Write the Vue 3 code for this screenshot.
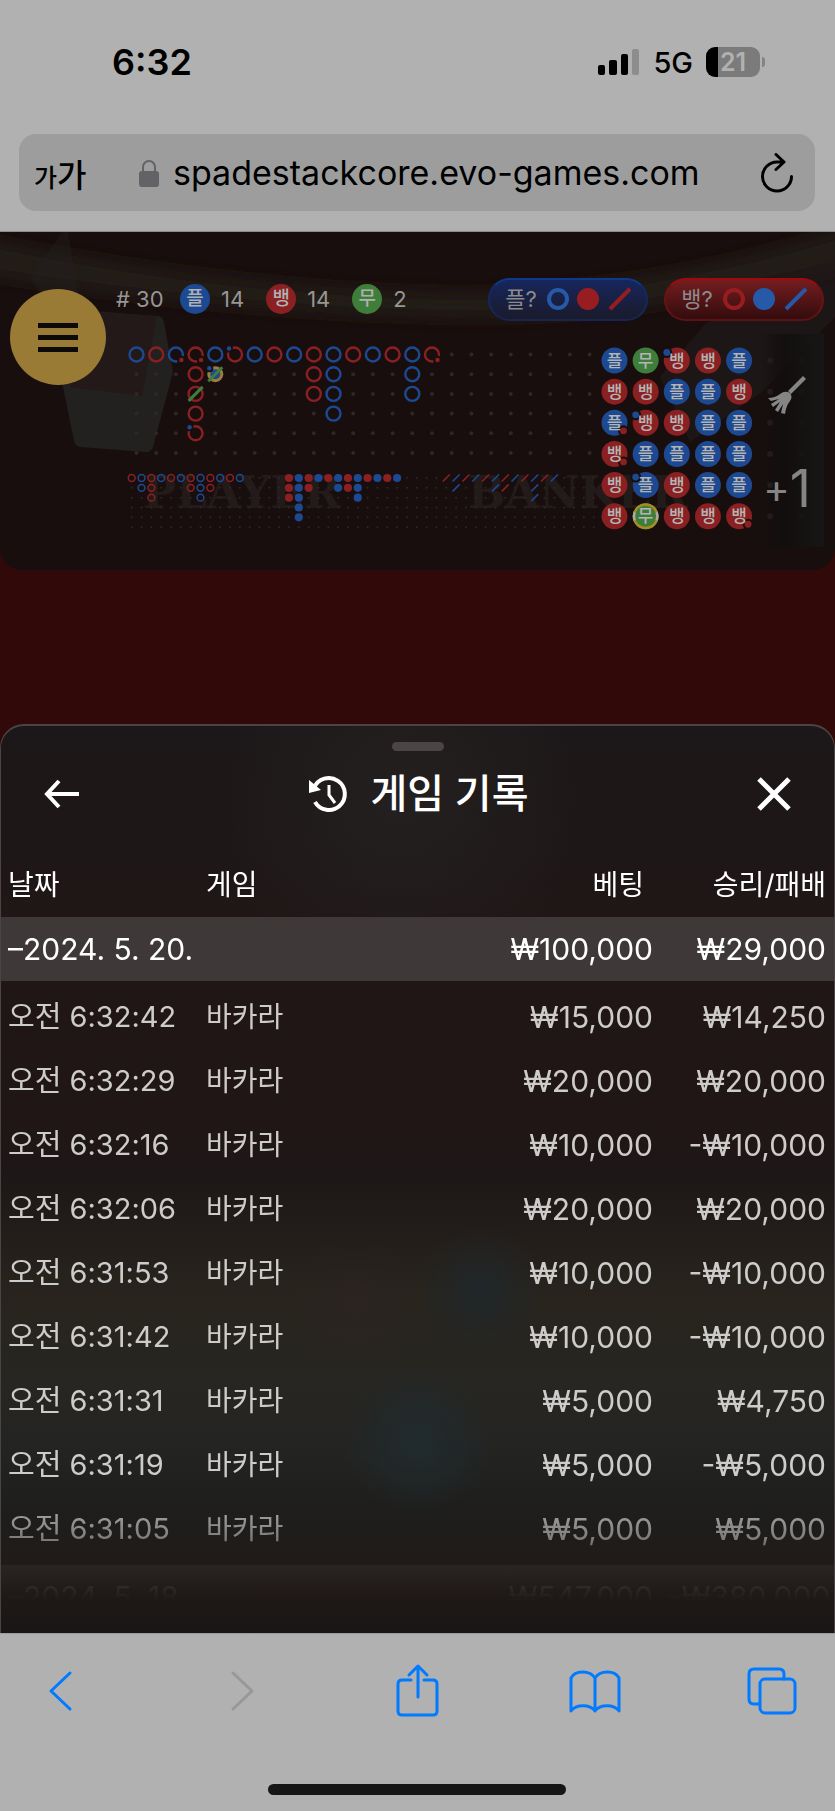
<template>
  <div class="phone">
    <header class="top">
      <div class="status">
        <span class="clock">6:32</span>
        <div class="signals">
          <svg width="42" height="26" viewBox="0 0 42 26" aria-hidden="true">
            <rect x="0" y="16" width="7" height="10" rx="2" />
            <rect x="11" y="11" width="8" height="15" rx="2" />
            <rect x="23" y="5" width="7" height="21" rx="2" />
            <rect x="34" y="0" width="7" height="26" rx="2" fill="#8d8d8d" />
          </svg>
          <span class="network">5G</span>
          <div class="battery"><span>21</span></div>
        </div>
      </div>
      <div class="address">
        <button class="text-size" aria-label="글자 크기"><small>가</small>가</button>
        <svg width="20" height="28" viewBox="0 0 20 28" aria-hidden="true">
          <path d="M4 13V8a6 6 0 0 1 12 0v5" fill="none" stroke="#626267" stroke-width="2" />
          <rect x="0" y="12" width="20" height="16" rx="3" fill="#626267" />
        </svg>
        <input v-model="url" type="text" aria-label="주소" />
        <button aria-label="새로고침">
          <svg width="36" height="40" viewBox="0 0 36 40" fill="none" stroke="#000" stroke-width="3" stroke-linecap="round" stroke-linejoin="round">
            <path d="M25 9H18a14.500 14.500 0 1 0 14.500 14.500M17 1.500l8 7.500-8 7.500" />
          </svg>
        </button>
      </div>
    </header>

    <main class="game">
      <section class="board">
        <svg class="scene" viewBox="0 0 835 338" preserveAspectRatio="none" aria-hidden="true">
          <filter id="soft" x="-10%" y="-30%" width="120%" height="160%"><feGaussianBlur stdDeviation="8" /></filter>
          <path d="M-30 4C160 44 350 62 480 60S750 28 865 -8V32C740 56 640 86 480 86S120 66 -30 40Z" fill="#201b18" filter="url(#soft)" />
          <path d="M62 0L30 46 40 60 80 72 68 0Z" fill="#242020" opacity=".4" />
          <path d="M92 79L158 84Q163 85 164 90L173 140 153 215Q151 220 146 220L80 215Q75 214 74 209L60 140Z" fill="#232020" />
          <path d="M98 80L157 84 142 164 70 155Z" fill="#231919" />
          <path d="M705 92L775 50 835 25V85L762 160 690 210 660 145Z" fill="#201a19" opacity=".7" />
        </svg>

        <button class="menu" aria-label="메뉴"><i></i><i></i><i></i></button>

        <div class="score">
          <div class="counts">
            <span class="rounds"># 30</span>
            <template v-for="item in counts" :key="item.kind">
              <b :class="['badge', item.kind]">{{ labels[item.kind] }}</b>
              <span class="total">{{ item.total }}</span>
            </template>
            <button v-for="ask in asks" :key="ask.kind" :class="['ask', ask.kind]">
              <span>{{ labels[ask.kind] }}?</span>
              <svg width="86" height="24" viewBox="0 0 86 24" aria-hidden="true">
                <circle cx="13" cy="12" r="9" fill="none" :stroke="ask.ring" stroke-width="4" />
                <circle cx="43" cy="12" r="11" :fill="ask.dot" />
                <path d="M65 22L85 2" :stroke="ask.slash" stroke-width="4" />
              </svg>
            </button>
          </div>

          <div class="roads">
            <svg class="marks" viewBox="0 0 708 213" aria-hidden="true">
              <text x="27" y="174">PLAYER</text>
              <text x="352" y="174">BANKER</text>
            </svg>

            <svg class="road-main" viewBox="0 0 484 213" role="img" aria-label="빅로드">
              <g v-for="cell in bigRoad" :key="cell.id" :transform="`translate(${cell.x} ${cell.y})`">
                <circle v-if="!cell.code" r="2" fill="#302625" />
                <template v-else>
                  <circle v-if="cell.code.includes('g')" r="8" fill="#a07c3a" />
                  <circle :r="cell.code.includes('g') ? 5 : 7" :fill="cell.code.includes('g') ? colors.B : 'none'" :stroke="cell.code.includes('g') ? 'none' : colors[cell.code[0]]" stroke-width="2.4" />
                  <path v-if="cell.code.includes('t')" d="M-7 7L7 -7" :stroke="colors.T" stroke-width="3" />
                  <template v-if="cell.code.includes('l')">
                    <circle cx="-6" cy="-6" r="4" fill="#190e0e" />
                    <circle cx="-6" cy="-6" r="2.2" :fill="colors.B" />
                  </template>
                  <template v-if="cell.code.includes('r')">
                    <circle cx="5" cy="5" r="4" fill="#190e0e" />
                    <circle cx="5.5" cy="5.5" r="2.2" :fill="colors.R" />
                  </template>
                </template>
              </g>
              <g v-for="cell in smallRoads" :key="cell.id" :transform="`translate(${cell.x} ${cell.y})`">
                <circle v-if="!cell.code" r="1" fill="#302625" />
                <circle v-else-if="cell.col < 16" r="3.4" fill="none" :stroke="colors[cell.code]" stroke-width="1.5" />
                <circle v-else-if="cell.col < 32" r="4.1" :fill="colors[cell.code]" />
                <path v-else d="M-3.5 3.5L3.5 -3.5" :stroke="colors[cell.code]" stroke-width="1.6" />
              </g>
            </svg>

            <svg class="road-bead" viewBox="0 0 224 213" role="img" aria-label="비드 플레이트">
              <g v-for="cell in beads" :key="cell.id" :transform="`translate(${cell.x} ${cell.y})`">
                <circle v-if="!cell.code" r="3" fill="#2b2322" />
                <template v-else>
                  <circle r="13" :fill="colors[cell.code[0]]" />
                  <circle v-if="cell.code.includes('g')" r="11.8" fill="none" stroke="#a98b22" stroke-width="2.4" />
                  <path v-if="cell.code.includes('g')" d="M-11 -4A11.8 11.8 0 0 0 -11 4M11 -4A11.8 11.8 0 0 1 11 4" fill="none" stroke="#aaa" stroke-width="2.4" />
                  <template v-if="cell.code.includes('l')">
                    <circle cx="-10" cy="-8" r="5.5" fill="#190e0e" />
                    <circle cx="-10" cy="-8" r="3.4" :fill="colors.B" />
                  </template>
                  <template v-if="cell.code.includes('r')">
                    <circle cx="9" cy="8" r="5.5" fill="#190e0e" />
                    <circle cx="9" cy="8" r="3.4" :fill="colors.R" />
                  </template>
                  <text class="bead-text" y="6">{{ beadLabels[cell.code[0]] }}</text>
                </template>
              </g>
            </svg>

            <aside class="side">
              <svg width="40" height="40" viewBox="0 0 40 40" fill="#858585" aria-hidden="true">
                <path d="M36 0l3 3-15 15-3-3z" />
                <path d="M1 22q7 0 12-4 5-4 10-1 3 4 0 8-4 5-5 13l-4-1 2-9-5 8-3-2 5-8-7 5-2-3 8-5-8 2z" />
              </svg>
              <strong><span>+</span>1</strong>
            </aside>
          </div>
        </div>
      </section>

      <section class="sheet">
        <div class="handle"></div>
        <div class="title">
          <button aria-label="뒤로">
            <svg width="36" height="32" viewBox="0 0 36 32" fill="none" stroke="#fff" stroke-width="4">
              <path d="M35 16H4M15 3L3 16l12 13" />
            </svg>
          </button>
          <h1>
            <svg width="40" height="40" viewBox="0 0 40 40" fill="none" stroke="#fff" stroke-width="4" aria-hidden="true">
              <path d="M6 14a16 16 0 1 1 1 14" />
              <path d="M1 6v13l12-3z" fill="#fff" stroke="none" />
              <path d="M21 11v10l6 8" stroke-width="3" />
            </svg>
            게임 기록
          </h1>
          <button aria-label="닫기">
            <svg width="36" height="36" viewBox="0 0 36 36" fill="none" stroke="#fff" stroke-width="5">
              <path d="M3 3l30 30M33 3L3 33" />
            </svg>
          </button>
        </div>

        <table class="history">
          <colgroup>
            <col class="c-date" />
            <col />
            <col class="c-bet" />
            <col class="c-win" />
          </colgroup>
          <thead>
            <tr>
              <th>날짜</th>
              <th>게임</th>
              <th class="bet">베팅</th>
              <th>승리/패배</th>
            </tr>
          </thead>
          <tbody v-for="day in days" :key="day.date">
            <tr class="day">
              <td colspan="2">{{ day.date }}</td>
              <td>{{ day.bet }}</td>
              <td>{{ day.win }}</td>
            </tr>
            <tr v-for="row in day.rows" :key="row[0]">
              <td class="time">오전 {{ row[0] }}</td>
              <td class="name">바카라</td>
              <td>{{ row[1] }}</td>
              <td>{{ row[2] }}</td>
            </tr>
          </tbody>
        </table>
      </section>
    </main>

    <footer class="bottom">
      <nav>
        <button aria-label="이전 페이지">
          <svg viewBox="0 0 52 56"><path d="M36 10L17 28l19 18" /></svg>
        </button>
        <button aria-label="다음 페이지" disabled>
          <svg viewBox="0 0 52 56"><path d="M21 10l19 18-19 18" /></svg>
        </button>
        <button aria-label="공유">
          <svg viewBox="0 0 52 56"><path d="M20 17h-9q-4 0-4 4v27q0 4 4 4h31q4 0 4-4V21q0-4-4-4h-9M27 34V3M18 12l9-9 9 9" /></svg>
        </button>
        <button aria-label="책갈피">
          <svg viewBox="0 0 52 56"><path d="M26 15C21 7 6 7 2 15v33c5-7 19-7 24 0 5-7 19-7 24 0V15c-4-8-19-8-24 0zM26 15v33" /></svg>
        </button>
        <button aria-label="탭">
          <svg viewBox="0 0 52 56"><path d="M12 41H7q-5 0-5-5V11q0-5 5-5h25q5 0 5 5v5" /><rect x="13" y="16" width="35" height="34" rx="5" /></svg>
        </button>
      </nav>
      <div class="home"></div>
    </footer>
  </div>
</template>

<script setup>
import { ref } from 'vue';

const url = ref('spadestackcore.evo-games.com');

const colors = { B: '#1c4991', R: '#8b2022', T: '#3f7e3a' };
const labels = { player: '플', banker: '뱅', tie: '무' };
const beadLabels = { B: '플', R: '뱅', T: '무' };

const counts = [
  { kind: 'player', total: 14 },
  { kind: 'banker', total: 14 },
  { kind: 'tie', total: 2 },
];

const asks = [
  { kind: 'player', ring: '#2659a8', dot: '#981d21', slash: '#981d21' },
  { kind: 'banker', ring: '#981d21', dot: '#2659a8', slash: '#2659a8' },
];

// Each entry is a column; cells go from top to bottom.
// l / r = pair mark, t = tie, g = gold
const bigColumns = [
  'B', 'R', 'Br', 'Rr R Rt R Rl', 'B Bgtl', 'Rl', 'B', 'R', 'B', 'R R R',
  'B B B B', 'R', 'B', 'R', 'B B B', 'Rr',
];

const smallColumns = [
  'R', 'B B', 'R R R', 'B', 'R', 'B', 'R R', 'B B B', 'R R', 'B', 'R', 'B', '', '', '', '',
  'R R R', 'B B B B B', 'R R', 'B', 'R', 'B B', 'R R', 'B B B', 'R', 'B', 'R', 'B', '', '', '', '',
  'R', 'B B', 'R', 'B', 'R', 'B B', 'R R', 'B', 'R', 'B B B', 'R', 'B',
];

const beadColumns = [
  'B R Br Rr R R',
  'T R Rl B Bl Tg',
  'Rl B R B R R',
  'R B B B B R',
  'B R B B B Rr',
];

// Spreads the columns over a grid that is 6 rows high
const layout = (columns, count, left, top, step) => {
  const cells = [];
  for (let col = 0; col < count; col++) {
    const codes = (columns[col] || '').split(' ');
    for (let row = 0; row < 6; row++) {
      cells.push({ id: `${col}-${row}`, col, code: codes[row], x: left + col * step, y: top + row * step });
    }
  }
  return cells;
};

const bigRoad = layout(bigColumns, 24, 20.5, 20.5, 19.7);
const smallRoads = layout(smallColumns, 48, 15.7, 144, 9.83);
const beads = layout(beadColumns, 7, 14.5, 26.5, 31.15);

const days = [
  {
    date: '–2024. 5. 20.',
    bet: '₩100,000',
    win: '₩29,000',
    rows: [
      ['6:32:42', '₩15,000', '₩14,250'],
      ['6:32:29', '₩20,000', '₩20,000'],
      ['6:32:16', '₩10,000', '-₩10,000'],
      ['6:32:06', '₩20,000', '₩20,000'],
      ['6:31:53', '₩10,000', '-₩10,000'],
      ['6:31:42', '₩10,000', '-₩10,000'],
      ['6:31:31', '₩5,000', '₩4,750'],
      ['6:31:19', '₩5,000', '-₩5,000'],
      ['6:31:05', '₩5,000', '₩5,000'],
    ],
  },
  { date: '–2024. 5. 18.', bet: '₩547,000', win: '-₩380,000', rows: [] },
];
</script>

<style>
body { margin: 0; background: #b1b1b1; }
</style>

<style scoped>
.phone { font-family: Inter, "Noto Sans CJK KR", sans-serif; color: #000; }
button { padding: 0; border: none; background: none; font: inherit; color: inherit; cursor: pointer; }
svg { display: block; flex-shrink: 0; }

.top { padding: 36px 20px 20px 19px; background: #b1b1b1; border-bottom: 1px solid #8b8b8b; }
.status { display: flex; justify-content: space-between; align-items: center; height: 52px; padding: 0 55px 0 93px; }
.clock { font-size: 36px; font-weight: 600; }
.signals { display: flex; align-items: center; gap: 13px; }
.network { font-size: 29px; font-weight: 500; }
.battery { position: relative; width: 54px; height: 30px; border-radius: 9px; background: linear-gradient(90deg, #000 12px, #7b7b7b 12px); color: #b1b1b1; font-size: 25px; font-weight: 600; line-height: 30px; text-align: center; }
.battery::after { content: ""; position: absolute; right: -5px; top: 10px; width: 3px; height: 10px; border-radius: 0 4px 4px 0; background: #848484; }
.address { display: flex; align-items: center; height: 77px; margin-top: 46px; padding: 0 20px 0 15px; border-radius: 17px; background: #9d9d9d; }
.text-size { width: 105px; font-size: 32px; font-weight: 500; text-align: left; white-space: nowrap; }
.text-size small { font-size: 25px; }
.address input { flex: 1; min-width: 0; padding: 0 0 0 14px; border: none; outline: none; background: none; font: inherit; font-size: 34px; color: #000; }

.game { background: #310909; }
.board { position: relative; display: grid; grid-template-columns: 96px 1fr; gap: 10px; padding: 45px 11px 23px 10px; border-radius: 0 0 22px 22px; background: #190e0e; overflow: hidden; }
.scene { position: absolute; inset: 0; width: 100%; height: 100%; }
.menu { position: relative; display: flex; flex-direction: column; align-items: center; justify-content: center; gap: 7px; width: 96px; height: 96px; margin-top: 12px; border-radius: 50%; background: #997b36; }
.menu i { width: 40px; height: 5px; background: #0c0a08; }
.score { position: relative; min-width: 0; }
.counts { display: flex; align-items: center; height: 44px; font-size: 22px; color: #989595; white-space: nowrap; }
.rounds { width: 64px; }
.badge { width: 30px; height: 30px; border-radius: 50%; color: #b0b0b0; font-size: 19px; font-weight: 500; line-height: 29px; text-align: center; }
.badge.player { background: #1c4991; }
.badge.banker { background: #8b2022; }
.badge.tie { background: #3f7e3a; }
.total { min-width: 22px; margin: 0 22px 0 11px; }
.ask { box-sizing: border-box; display: flex; align-items: center; justify-content: center; gap: 8px; width: 160px; height: 43px; border: 2px solid; border-radius: 22px; font-size: 22px; color: #8b8b8b; }
.ask span { padding-bottom: 4px; }
.ask.player { margin-left: auto; border-color: #0d3b8c #142a5e #172552; background: linear-gradient(#17265c, #1a1a2b); }
.ask.banker { margin-left: 16px; border-color: #a00a0c #6d1214 #5e1214; background: linear-gradient(#741d20, #330c0d); }
.roads { position: relative; display: flex; margin-top: 13px; }
.marks { position: absolute; inset: 0; width: 100%; }
.marks text { font-family: "DejaVu Serif", serif; font-size: 44px; font-weight: 700; fill: #221b1a; }
.road-main { position: relative; flex: 484 1 0; min-width: 0; }
.road-bead { position: relative; flex: 224 1 0; min-width: 0; }
.bead-text { font-size: 17px; font-weight: 500; fill: #b4b4b4; text-anchor: middle; }
.side { position: absolute; top: 0; right: 0; bottom: 0; display: flex; flex-direction: column; align-items: center; justify-content: space-between; width: 64px; padding: 42px 10px 30px 0; box-sizing: border-box; background: linear-gradient(90deg, transparent, #110e0ed9 40%, #171616e6); }
.side strong { display: flex; align-items: center; font-size: 52px; font-weight: 400; line-height: 56px; color: #858585; }
.side strong span { font-size: 40px; }

.sheet { margin-top: 154px; padding: 16px 0 4px; border: 2px solid #4a4444; border-width: 2px 1px 0; border-radius: 24px 24px 0 0; color: #fff; background: radial-gradient(circle at 417px 715px, #202b2e, transparent 75px), radial-gradient(circle at 480px 565px, #20272a, transparent 65px), radial-gradient(circle at 355px 580px, #30242466, transparent 70px), radial-gradient(circle at 400px 70px, #242020, transparent 190px), linear-gradient(#1c1718 0, #1e1717 130px, #211616 220px, #211616 400px, #1d1717 450px, #28241d 570px, #272622 660px, #232322 730px, #1e1e1c 780px, #201a18 860px, #191615 100%); }
.handle { width: 52px; height: 9px; margin: 0 auto; border-radius: 5px; background: #4b4545; }
.title { display: flex; align-items: center; justify-content: space-between; height: 86px; padding: 0 42px 0 43px; }
.title h1 { display: flex; align-items: center; gap: 23px; margin: 0; font-size: 40px; font-weight: 500; line-height: 48px; }
.history { width: 100%; table-layout: fixed; border-collapse: collapse; font-size: 30px; line-height: 40px; -webkit-mask-image: linear-gradient(#000 640px, #0009 695px, #0004 735px, #0001 750px, transparent 764px); mask-image: linear-gradient(#000 640px, #0009 695px, #0004 735px, #0001 750px, transparent 764px); }
.c-date { width: 198px; }
.c-bet, .c-win { width: 173px; }
th, td { height: 64px; padding: 0 8px 0 7px; text-align: left; font-weight: 400; color: #cecbcb; white-space: nowrap; }
th { height: 64px; padding-top: 16px; font-size: 28px; color: #fff; }
th:nth-child(n + 3), td:nth-last-child(-n + 2) { text-align: right; }
th.bet { padding-right: 17px; }
.time { font-size: 29px; }
.name { font-size: 28px; }
.day td { background: #3e3938; color: #fff; }
.day + tr td { padding-top: 4px; }
tr:not(.day):last-child td { padding-bottom: 4px; }

.bottom { padding: 29px 36px 17px 34px; border-top: 1px solid #9b9b9b; background: #b1b1b1; }
.bottom nav { display: flex; justify-content: space-between; }
.bottom nav svg { width: 52px; height: 56px; fill: none; stroke: #007aff; stroke-width: 3; stroke-linecap: round; stroke-linejoin: round; }
.bottom nav button:disabled svg { stroke: #989898; }
.home { width: 298px; height: 11px; margin: 65px auto 0; border-radius: 6px; background: #161616; }
</style>
